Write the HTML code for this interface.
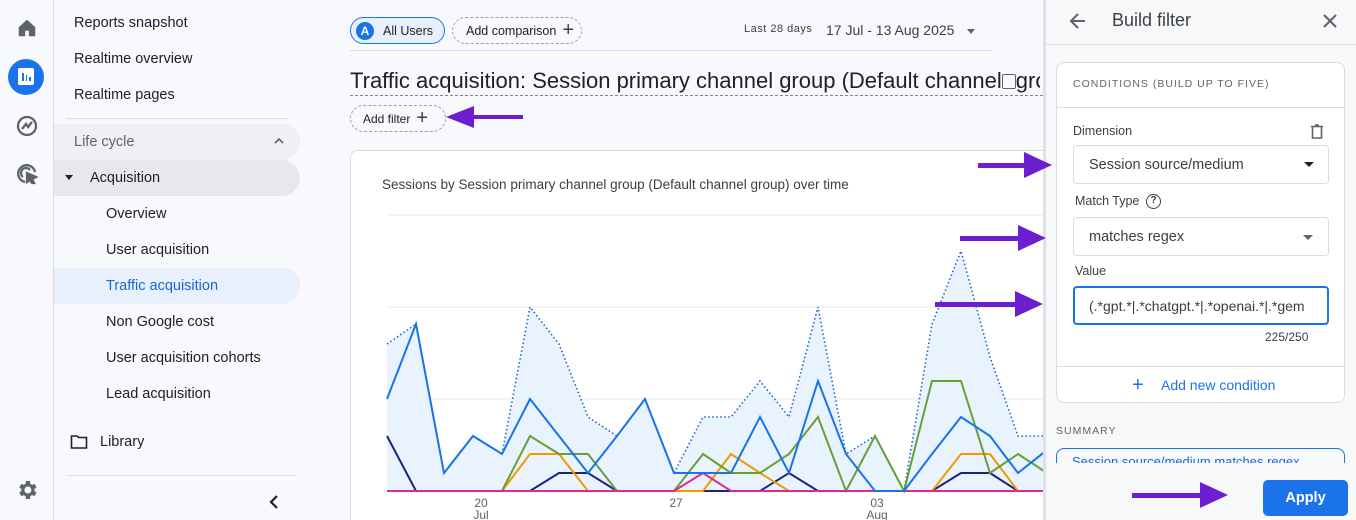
<!DOCTYPE html>
<html><head><meta charset="utf-8"><style>
*{box-sizing:border-box;margin:0;padding:0}
html,body{width:1356px;height:520px;overflow:hidden}
body{background:#f8f9fc;font-family:"Liberation Sans",Arial,sans-serif;color:#202124;position:relative}
.abs{position:absolute}
.rail{left:0;top:0;width:54px;height:520px;border-right:1px solid #dadce0;background:#f8f9fc}
.nav{left:74px;font-size:14.5px;color:#202124}
.sub{left:106px;font-size:14.5px}
.chip{border-radius:14px;height:27px;font-size:12.5px;display:flex;align-items:center}
.panel{left:1043px;top:0;width:313px;height:520px;background:#f7f8fa;border-left:3px solid #dfe1e5}
.sel{left:1073px;width:256px;height:39px;border:1px solid #dadce0;border-radius:4px;background:#fff;font-size:14.5px;padding-left:15px;display:flex;align-items:center;color:#3c4043}
</style></head><body>
<div class="abs rail"></div>
<svg class="abs" style="left:16px;top:17px" width="22" height="22" viewBox="0 0 24 24"><path d="M3 11 L12 3 L21 11 V21 H14 V15 H10 V21 H3Z" fill="#5f6368"/></svg>
<div class="abs" style="left:8px;top:59px;width:36px;height:36px;border-radius:50%;background:#1a73e8"></div>
<div class="abs" style="left:18px;top:68px;width:16px;height:17px;background:#fff;border-radius:2px"></div>
<div class="abs" style="left:22px;top:73px;width:1.5px;height:8px;background:#1a73e8"></div>
<div class="abs" style="left:25.5px;top:75px;width:1.5px;height:6px;background:#1a73e8"></div>
<div class="abs" style="left:29px;top:77px;width:1.5px;height:4px;background:#1a73e8"></div>
<svg class="abs" style="left:15px;top:114px" width="24" height="24" viewBox="0 0 24 24" fill="none" stroke="#5f6368" stroke-width="2.3"><circle cx="12" cy="12" r="9"/><path d="M7 15 L11 10 L13 13 L17 8"/></svg>
<svg class="abs" style="left:15px;top:162px" width="24" height="24" viewBox="0 0 24 24" fill="none" stroke="#5f6368" stroke-width="2.3"><path d="M20 10 A8.5 8.5 0 1 0 10 20"/><path d="M15 8 A5 5 0 1 0 8 15"/><path d="M12 11 L21 15 L17 17 L19 21 L17 21 L15 18 L12 20Z" fill="#5f6368"/></svg>
<svg class="abs" style="left:15px;top:478px" width="24" height="24" viewBox="0 0 24 24"><path fill="#5f6368" d="M19.4 13a7.5 7.5 0 0 0 0-2l2.1-1.6-2-3.5-2.5 1a7 7 0 0 0-1.7-1L14.9 3h-4l-.4 2.9a7 7 0 0 0-1.7 1l-2.5-1-2 3.5L6.4 11a7.5 7.5 0 0 0 0 2l-2.1 1.6 2 3.5 2.5-1a7 7 0 0 0 1.7 1l.4 2.9h4l.4-2.9a7 7 0 0 0 1.7-1l2.5 1 2-3.5zM12.9 15.5a3.5 3.5 0 1 1 0-7 3.5 3.5 0 0 1 0 7z"/></svg>

<div class="abs nav" style="top:15px">Reports snapshot</div>
<div class="abs nav" style="top:51px">Realtime overview</div>
<div class="abs nav" style="top:87px">Realtime pages</div>
<div class="abs" style="left:66px;top:118px;width:222px;height:1px;background:#dadce0"></div>
<div class="abs" style="left:54px;top:124px;width:246px;height:36px;background:#eef0f3;border-radius:0 18px 18px 0"></div>
<div class="abs nav" style="top:134px;color:#5f6368">Life cycle</div>
<svg class="abs" style="left:273px;top:136px" width="12" height="10" viewBox="0 0 12 10"><path d="M2 7 L6 3 L10 7" stroke="#5f6368" stroke-width="1.6" fill="none"/></svg>
<div class="abs" style="left:54px;top:160px;width:246px;height:36px;background:#e6e8eb;border-radius:0 18px 18px 0"></div>
<div class="abs" style="left:65px;top:175px;border-left:4px solid transparent;border-right:4px solid transparent;border-top:5px solid #202124"></div>
<div class="abs" style="left:90px;top:170px;font-size:14.5px">Acquisition</div>
<div class="abs sub" style="top:206px">Overview</div>
<div class="abs sub" style="top:242px">User acquisition</div>
<div class="abs" style="left:54px;top:268px;width:246px;height:36px;background:#e8f0fe;border-radius:0 18px 18px 0"></div>
<div class="abs sub" style="top:278px;color:#1967d2">Traffic acquisition</div>
<div class="abs sub" style="top:314px">Non Google cost</div>
<div class="abs sub" style="top:350px">User acquisition cohorts</div>
<div class="abs sub" style="top:386px">Lead acquisition</div>
<svg class="abs" style="left:70px;top:434px" width="18" height="16" viewBox="0 0 18 16"><path d="M1.5 2 H7 L8.5 3.5 H16.5 V14 H1.5Z" fill="none" stroke="#202124" stroke-width="1.6"/></svg>
<div class="abs" style="left:100px;top:434px;font-size:14.5px">Library</div>
<div class="abs" style="left:67px;top:475px;width:230px;height:1px;background:#dadce0"></div>
<svg class="abs" style="left:268px;top:494px" width="12" height="16" viewBox="0 0 12 16"><path d="M9 2 L3 8 L9 14" stroke="#202124" stroke-width="2.2" fill="none"/></svg>

<div class="abs chip" style="left:350px;top:17px;width:95px;border:1.5px solid #1a73e8;background:#e8f0fe"><span style="margin-left:5px;width:18px;height:18px;border-radius:50%;background:#1a73e8;color:#fff;font-size:12px;font-weight:bold;display:flex;align-items:center;justify-content:center">A</span><span style="margin-left:9px">All Users</span></div>
<div class="abs chip" style="left:452px;top:17px;width:130px;border:1px dashed #9aa0a6;padding-left:13px">Add comparison<span style="font-size:20px;margin-left:6px;color:#3c4043;font-weight:300">+</span></div>
<div class="abs" style="left:744px;top:23px;font-size:11px;color:#3c4043;letter-spacing:.5px">Last 28 days</div>
<div class="abs" style="left:826px;top:22px;font-size:14px;color:#3c4043">17 Jul - 13 Aug 2025</div>
<div class="abs" style="left:967px;top:29px;border-left:4px solid transparent;border-right:4px solid transparent;border-top:5px solid #5f6368"></div>
<div class="abs" style="left:350px;top:50px;width:642px;height:1px;background:#dadce0"></div>
<div class="abs" style="left:350px;top:68px;font-size:22px;white-space:nowrap;width:690px;overflow:hidden;color:#202124">Traffic acquisition: Session primary channel group (Default channel<span style="display:inline-block;width:14px;height:15px;border:1.5px solid #5f6368;border-radius:2px;vertical-align:-1px"></span>group)</div>
<div class="abs" style="left:350px;top:95px;width:693px;border-top:1.5px dashed #80868b"></div>
<div class="abs chip" style="left:350px;top:105px;width:96px;border:1px dashed #9aa0a6;padding-left:12px;font-size:12px">Add filter<span style="font-size:20px;margin-left:6px;color:#3c4043;font-weight:300">+</span></div>

<div class="abs" style="left:350px;top:150px;width:700px;height:370px;background:#fff;border:1px solid #dadce0;border-bottom:none;border-radius:8px 8px 0 0"></div>
<div class="abs" style="left:382px;top:177px;font-size:13.5px;color:#3c4043">Sessions by Session primary channel group (Default channel group) over time</div>
<svg class="abs" style="left:0;top:0" width="1043" height="520">
<line x1="387" y1="215" x2="1043" y2="215" stroke="#e8eaed"/>
<line x1="387" y1="307" x2="1043" y2="307" stroke="#e8eaed"/>
<line x1="387" y1="399" x2="1043" y2="399" stroke="#e8eaed"/>
<polygon fill="#e8f3fd" points="387,344 416,324 444,473 473,436 502,454 530,307 559,344 588,417 617,436 645,399 674,473 703,417 731,417 760,381 789,417 818,307 846,454 875,436 904,491 932,324 961,251 990,357 1018,436 1047,436 1047,491 387,491"/>
<polyline fill="none" stroke="#1967d2" stroke-width="1.6" stroke-dasharray="1.5,2.5" points="387,344 416,324 444,473 473,436 502,454 530,307 559,344 588,417 617,436 645,399 674,473 703,417 731,417 760,381 789,417 818,307 846,454 875,436 904,491 932,324 961,251 990,357 1018,436 1047,436"/>
<polyline fill="none" stroke="#1a237e" stroke-width="2" points="387,436 416,491 530,491 559,473 588,473 617,491 760,491 789,473 818,491 932,491 961,473 990,473 1018,491 1047,491"/>
<polyline fill="none" stroke="#f29900" stroke-width="2" points="387,491 502,491 530,454 559,454 588,491 703,491 731,454 760,473 789,491 932,491 961,454 990,454 1018,491 1047,491"/>
<polyline fill="none" stroke="#689f38" stroke-width="2" points="387,491 502,491 530,436 559,454 588,454 617,491 674,491 703,454 731,473 760,473 789,454 818,417 846,491 875,436 904,491 932,381 961,381 990,473 1018,454 1047,473"/>
<polyline fill="none" stroke="#e52592" stroke-width="2" points="387,491 674,491 703,473 731,491 1047,491"/>
<polyline fill="none" stroke="#1a73e8" stroke-width="2" points="387,399 416,324 444,473 473,436 502,454 530,399 559,436 588,473 617,436 645,399 674,473 703,473 731,473 760,417 789,473 818,381 846,454 875,491 904,491 932,454 961,417 990,436 1018,473 1047,450"/>
<g font-family="Liberation Sans" font-size="12" fill="#5f6368" text-anchor="middle"><text x="481" y="507">20</text><text x="481" y="519">Jul</text><text x="676" y="507">27</text><text x="877" y="507">03</text><text x="877" y="519">Aug</text></g>
</svg>

<div class="abs panel"></div>
<div class="abs" style="left:1046px;top:44px;width:310px;height:1px;background:#dadce0"></div>
<svg class="abs" style="left:1068px;top:11px" width="20" height="20" viewBox="0 0 20 20"><path d="M17 10 H4 M10 3 L3 10 L10 17" stroke="#5f6368" stroke-width="2" fill="none"/></svg>
<div class="abs" style="left:1112px;top:10px;font-size:18px;color:#3c4043">Build filter</div>
<svg class="abs" style="left:1321px;top:12px" width="18" height="18" viewBox="0 0 18 18"><path d="M3 3 L15 15 M15 3 L3 15" stroke="#5f6368" stroke-width="2"/></svg>
<div class="abs" style="left:1056px;top:62px;width:289px;height:341px;background:#fff;border:1px solid #dadce0;border-radius:8px"></div>
<div class="abs" style="left:1073px;top:78px;font-size:10.5px;letter-spacing:1px;color:#5f6368">CONDITIONS (BUILD UP TO FIVE)</div>
<div class="abs" style="left:1057px;top:107px;width:287px;height:1px;background:#dadce0"></div>
<div class="abs" style="left:1073px;top:124px;font-size:12.5px;color:#3c4043">Dimension</div>
<svg class="abs" style="left:1310px;top:124px" width="14" height="15" viewBox="0 0 14 15"><path d="M1 2.5 H13 M5 1 H9 M2.5 3 V14 H11.5 V3" fill="none" stroke="#5f6368" stroke-width="1.6"/></svg>
<div class="abs sel" style="top:145px">Session source/medium</div>
<div class="abs" style="left:1304px;top:162px;border-left:5px solid transparent;border-right:5px solid transparent;border-top:5px solid #202124"></div>
<div class="abs" style="left:1075px;top:194px;font-size:12.5px;color:#3c4043">Match Type</div>
<div class="abs" style="left:1146px;top:194px;width:15px;height:15px;border:1.5px solid #3c4043;border-radius:50%;font-size:10px;font-weight:bold;text-align:center;line-height:12px;color:#3c4043">?</div>
<div class="abs sel" style="top:217px">matches regex</div>
<div class="abs" style="left:1303px;top:235px;border-left:5px solid transparent;border-right:5px solid transparent;border-top:5px solid #5f6368"></div>
<div class="abs" style="left:1075px;top:264px;font-size:12.5px;color:#3c4043">Value</div>
<div class="abs sel" style="top:286px;border:2px solid #1a73e8;padding-left:14px;font-size:14px;white-space:nowrap;overflow:hidden">(.*gpt.*|.*chatgpt.*|.*openai.*|.*gem</div>
<div class="abs" style="left:1265px;top:330px;font-size:12px;color:#3c4043">225/250</div>
<div class="abs" style="left:1057px;top:366px;width:287px;height:1px;background:#dadce0"></div>
<div class="abs" style="left:1132px;top:374px;font-size:20px;color:#1a73e8">+</div>
<div class="abs" style="left:1161px;top:377px;font-size:14px;color:#1a73e8">Add new condition</div>
<div class="abs" style="left:1056px;top:425px;font-size:10.5px;letter-spacing:1px;color:#5f6368">SUMMARY</div>
<div class="abs" style="left:1056px;top:448px;width:289px;height:15px;border:1px solid #1a73e8;border-bottom:none;border-radius:8px 8px 0 0;overflow:hidden"><div style="margin:5px 0 0 15px;font-size:13px;color:#1967d2;white-space:nowrap">Session source/medium matches regex</div></div>
<div class="abs" style="left:1263px;top:480px;width:85px;height:36px;background:#1a73e8;border-radius:5px;color:#fff;font-size:14.5px;font-weight:bold;display:flex;align-items:center;justify-content:center">Apply</div>

<svg class="abs" style="left:0;top:0" width="1356" height="520">
<g fill="#6b1fcf">
<rect x="470" y="115" width="53" height="4"/><polygon points="446,117 474,106 474,128"/>
<rect x="978" y="163" width="50" height="5"/><polygon points="1052,165 1024,152 1024,178"/>
<rect x="960" y="236" width="60" height="5"/><polygon points="1046,238 1018,225 1018,251"/>
<rect x="935" y="302" width="85" height="5"/><polygon points="1043,304 1015,291 1015,317"/>
<rect x="1132" y="493" width="72" height="5"/><polygon points="1228,495 1200,482 1200,508"/>
</g></svg>
</body></html>
